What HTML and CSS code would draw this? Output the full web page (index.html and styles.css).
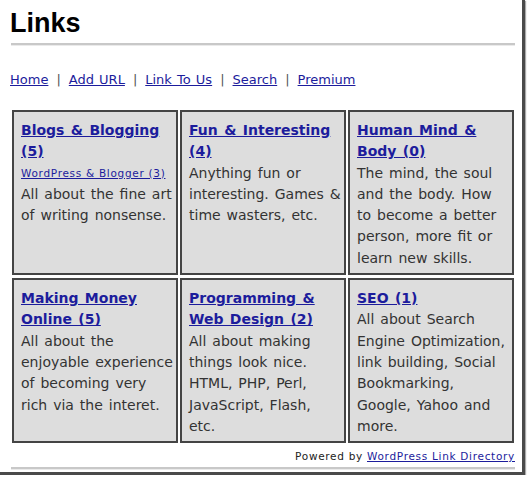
FILE: index.html
```html
<!DOCTYPE html>
<html lang="en">
<head>
  <meta charset="UTF-8" />
  <meta name="viewport" content="width=device-width, initial-scale=1.0"/>
  <title>Links</title>
  <link rel="stylesheet" href="styles.css">
</head>
<body>
  <div class="frame">

    <h1>Links</h1>
    <hr class="rule">

    <div class="nav">
      <a href="#">Home</a>
      <span>|</span>
      <a href="#">Add URL</a>
      <span>|</span>
      <a href="#">Link To Us</a>
      <span>|</span>
      <a href="#">Search</a>
      <span>|</span>
      <a href="#">Premium</a>
    </div>

    <!-- Categories -->
    <div class="directory">
      <div class="cat">
        <a class="cat-title" href="#">Blogs &amp; Blogging (5)</a>
        <a class="sub" href="#">WordPress &amp; Blogger (3)</a>
        <p>All about the fine art of writing nonsense.</p>
      </div>
      <div class="cat">
        <a class="cat-title" href="#">Fun &amp; Interesting (4)</a>
        <p>Anything fun or interesting. Games &amp; time wasters, etc.</p>
      </div>
      <div class="cat">
        <a class="cat-title" href="#">Human Mind &amp; Body (0)</a>
        <p>The mind, the soul and the body. How to become a better person, more fit or learn new skills.</p>
      </div>
      <div class="cat">
        <a class="cat-title" href="#">Making Money Online (5)</a>
        <p>All about the enjoyable experience of becoming very rich via the interet.</p>
      </div>
      <div class="cat">
        <a class="cat-title" href="#">Programming &amp; Web Design (2)</a>
        <p>All about making things look nice. HTML, PHP, Perl, JavaScript, Flash, etc.</p>
      </div>
      <div class="cat">
        <a class="cat-title" href="#">SEO (1)</a>
        <p>All about Search Engine Optimization, link building, Social Bookmarking, Google, Yahoo and more.</p>
      </div>
    </div>

    <div class="powered">Powered by <a href="#">WordPress Link Directory</a></div>
    <hr class="rule">

  </div>
</body>
</html>
```

FILE: styles.css
```css
body {
  margin: 0;
  background: #fff;
  font-family: 'DejaVu Sans', Verdana, sans-serif;
  color: #333;
}
a {
  color: #1c1c9c;
}

.frame {
  width: 525px;
  height: 475px;
  padding: 0 10px;
  box-sizing: border-box;
  border-right: 3px solid #4a4a4a;
  border-bottom: 3px solid #4a4a4a;
  box-shadow: 1px 1px 1px #aaa;
  overflow: hidden;
}

h1 {
  margin: 8px 0 0;
  font-family: 'Liberation Sans', Arial, sans-serif;
  font-size: 27px;
  line-height: 31px;
  color: #000;
}

.rule {
  height: 0;
  margin: 4px 0 0 1px;
  width: 504px;
  border: 0;
  border-top: 2px solid #c8c8c8;
  border-bottom: 1px solid #eaeaea;
}

.nav {
  display: flex;
  gap: 8px;
  margin-top: 26px;
  font-size: 13px;
  line-height: 15px;
  word-spacing: 1px;
}
.nav span {
  color: #555;
}

/* Category grid */
.directory {
  display: grid;
  grid-template-columns: repeat(3, 166px);
  gap: 3px 2px;
  margin: 23px 0 0 2px;
}
.cat {
  background: #ddd;
  border: 2px solid #444;
  padding: 8px 2px 4px 7px;
  font-size: 14px;
  line-height: 21.3px;
  word-spacing: 1.5px;
}
.cat-title {
  display: block;
  font-weight: bold;
}
.cat .sub {
  display: block;
  font-size: 10.5px;
  letter-spacing: 0.7px;
  word-spacing: normal;
}
.cat p {
  margin: 0;
}

.powered {
  margin-top: 7px;
  width: 505px;
  text-align: right;
  font-size: 10.5px;
  line-height: 13px;
  letter-spacing: 0.7px;
  color: #222;
}
.powered + .rule {
  margin-top: 4px;
}
```
